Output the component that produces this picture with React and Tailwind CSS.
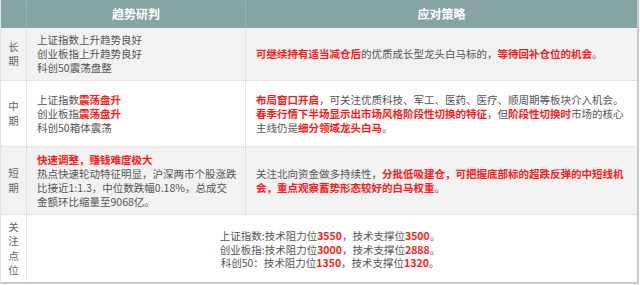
import React from 'react';

const R = ({ children }) => <span className="font-bold text-[#ff1a1a]">{children}</span>;

function Side({ children, gray, last }) {
  return (
    <div
      className={`flex flex-col items-center justify-center border-r border-dotted border-[#d4d4d4] text-[#666] leading-[14.5px] ${gray ? 'bg-[#f2f2f2]' : ''} ${last ? '' : 'border-b'}`}
    >
      {children.split('').map((c, i) => (
        <span key={i} className="block w-[11px] text-center">{c}</span>
      ))}
    </div>
  );
}

export default function App() {
  return (
    <div
      className="w-[640px] h-[285px] bg-white text-[10.5px] text-[#555]"
      style={{ fontFamily: '"Noto Sans CJK SC", "Noto Sans", sans-serif' }}
    >
      <div className="w-[639px] h-[284px] border-r-2 border-b-2 border-l border-[#c7cccb] border-l-[#e3e3e3] grid grid-cols-[26px_219px_1fr] grid-rows-[28px_53px_66px_68px_1fr]">
        {/* header */}
        <div className="bg-[#86a4a1] border-r border-dotted border-[#a9bfbc]" />
        <div className="bg-[#86a4a1] border-r border-dotted border-[#a9bfbc] flex items-center justify-center text-white font-bold text-[12px]">趋势研判</div>
        <div className="bg-[#86a4a1] flex items-center justify-center text-white font-bold text-[12px]">应对策略</div>

        {/* 长期 */}
        <Side gray>长期</Side>
        <div className="bg-[#f2f2f2] border-b border-r border-dotted border-[#d4d4d4] pl-[10px] flex flex-col justify-center leading-[14px] whitespace-nowrap">
          <div>上证指数上升趋势良好</div>
          <div>创业板指上升趋势良好</div>
          <div>科创50震荡盘整</div>
        </div>
        <div className="bg-[#f2f2f2] border-b border-dotted border-[#d4d4d4] pl-[10px] flex items-center whitespace-nowrap">
          <div><R>可继续持有适当减仓后</R>的优质成长型龙头白马标的，<R>等待回补仓位的机会</R>。</div>
        </div>

        {/* 中期 */}
        <Side>中期</Side>
        <div className="border-b border-r border-dotted border-[#d4d4d4] pl-[10px] flex flex-col justify-center leading-[14px] whitespace-nowrap">
          <div>上证指数<R>震荡盘升</R></div>
          <div>创业板指<R>震荡盘升</R></div>
          <div>科创50箱体震荡</div>
        </div>
        <div className="border-b border-dotted border-[#d4d4d4] pl-[10px] flex flex-col justify-center leading-[14px] whitespace-nowrap">
          <div><R>布局窗口开启</R>，可关注优质科技、军工、医药、医疗、顺周期等板块介入机会。</div>
          <div><R>春季行情下半场显示出市场风格阶段性切换的特征</R>，但<R>阶段性切换时</R>市场的核心</div>
          <div>主线仍是<R>细分领域龙头白马</R>。</div>
        </div>

        {/* 短期 */}
        <Side gray>短期</Side>
        <div className="bg-[#f2f2f2] border-b border-r border-dotted border-[#d4d4d4] pl-[10px] flex flex-col justify-center leading-[14px] whitespace-nowrap">
          <div><R>快速调整，赚钱难度极大</R></div>
          <div>热点快速轮动特征明显，沪深两市个股涨跌</div>
          <div>比接近1:1.3，中位数跌幅0.18%，总成交</div>
          <div>金额环比缩量至9068亿。</div>
        </div>
        <div className="bg-[#f2f2f2] border-b border-dotted border-[#d4d4d4] pl-[10px] flex flex-col justify-center leading-[14px] whitespace-nowrap">
          <div>关注北向资金做多持续性，<R>分批低吸建仓，可把握底部标的超跌反弹的中短线机</R></div>
          <div><R>会，重点观察蓄势形态较好的白马权重</R>。</div>
        </div>

        {/* 关注点位 */}
        <Side last>关注点位</Side>
        <div className="col-span-2 flex flex-col items-center justify-center pt-[2px] leading-[13.5px] whitespace-nowrap pr-[4px]">
          <div>上证指数:技术阻力位<R>3550</R>，技术支撑位<R>3500</R>。</div>
          <div>创业板指:技术阻力位<R>3000</R>，技术支撑位<R>2888</R>。</div>
          <div>科创50：技术阻力位<R>1350</R>，技术支撑位<R>1320</R>。</div>
        </div>
      </div>
    </div>
  );
}
